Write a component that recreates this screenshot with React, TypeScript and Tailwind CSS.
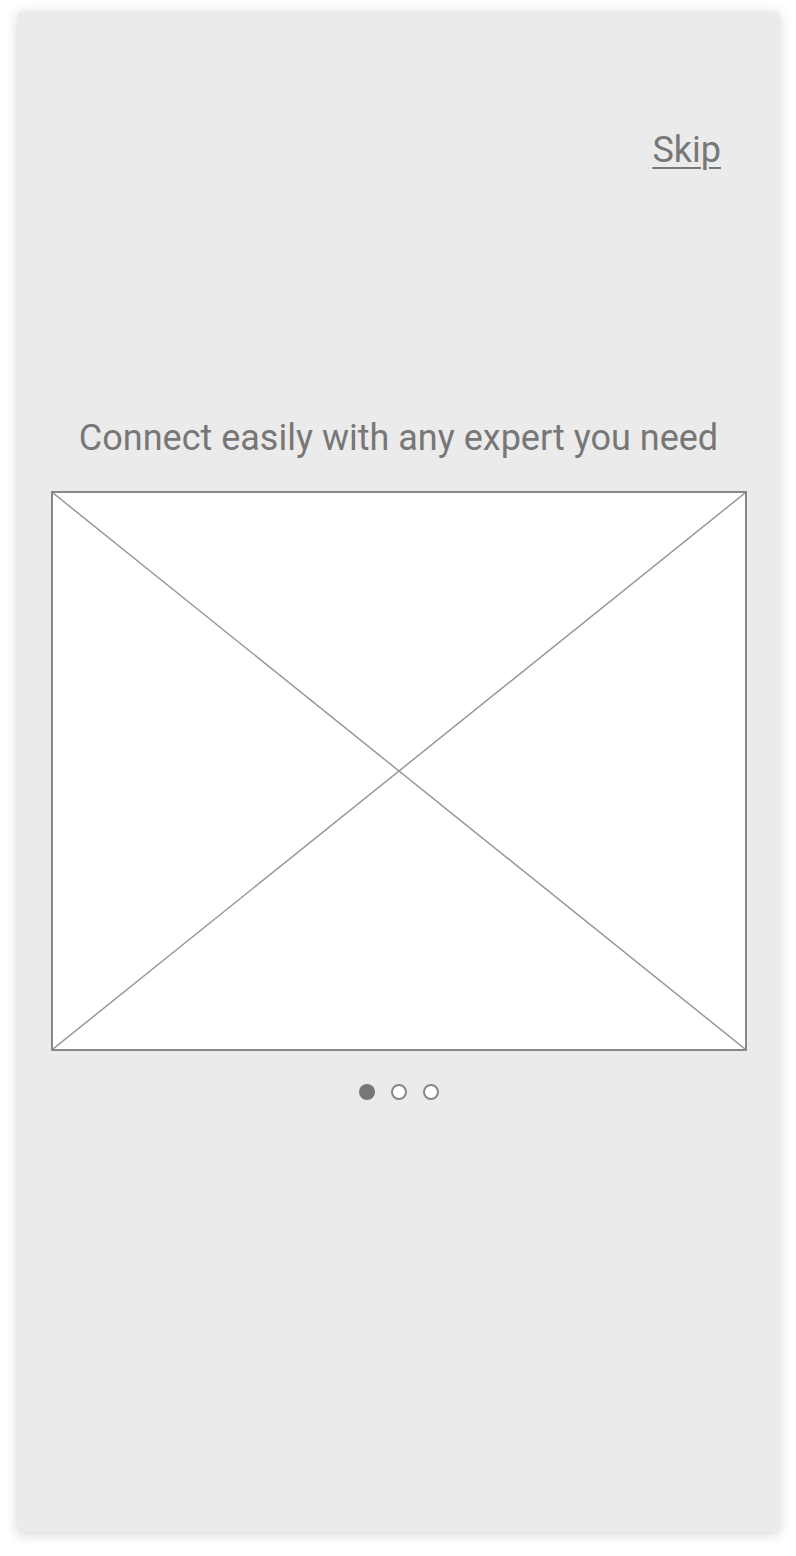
export default function App() {
  return (
    <div className="min-h-[1556px] w-[796px] bg-white pt-[12px] pl-[18px]" style={{ fontFamily: "Roboto, 'Liberation Sans', sans-serif" }}>
      <div className="flex h-[1520px] w-[761px] flex-col items-center bg-[#ebebeb] shadow-[0_2px_12px_rgba(0,0,0,0.18)]">
        <div className="flex w-full justify-end pr-[58px] pt-[116px]">
          <a className="text-[36px] leading-[44px] text-[#777] underline decoration-[2px] underline-offset-[5px]">Skip</a>
        </div>
        <h1 className="mt-[244px] text-[36px] leading-[44px] text-[#777]">Connect easily with any expert you need</h1>
        <div className="mt-[31px] h-[560px] w-[696px] border-2 border-[#888] bg-white">
          <svg className="h-full w-full" viewBox="0 0 692 556" preserveAspectRatio="none">
            <line x1="0" y1="0" x2="692" y2="556" stroke="#999" strokeWidth="1.5" />
            <line x1="692" y1="0" x2="0" y2="556" stroke="#999" strokeWidth="1.5" />
          </svg>
        </div>
        <div className="mt-[33px] flex items-center gap-[16px]">
          <span className="h-[16px] w-[16px] rounded-full bg-[#777]" />
          <span className="h-[16px] w-[16px] rounded-full border-2 border-[#888] bg-white" />
          <span className="h-[16px] w-[16px] rounded-full border-2 border-[#888] bg-white" />
        </div>
      </div>
    </div>
  );
}
